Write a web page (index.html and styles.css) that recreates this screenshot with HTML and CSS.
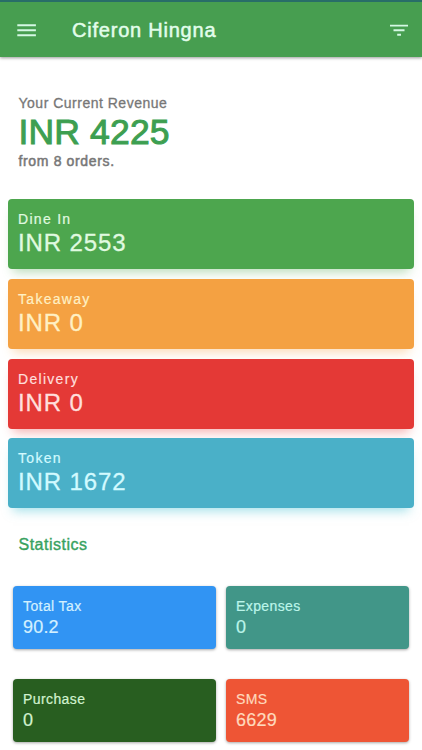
FILE: index.html
```
<!DOCTYPE html>
<html lang="en">
<head>
    <meta charset="UTF-8">
    <meta name="viewport" content="width=device-width, initial-scale=1.0">
    <title>Ciferon Hingna</title>
    <link rel="stylesheet" href="styles.css">
</head>
<body>
    <header class="header">
        <svg class="menu-icon" width="20" height="14" viewBox="0 0 20 14">
            <path d="M0.3 2.3h18.6M0.3 7.3h18.6M0.3 12.3h18.6"/>
        </svg>
        <h1 class="title">Ciferon Hingna</h1>
        <svg class="filter-icon" width="20" height="14" viewBox="0 0 20 14">
            <path d="M1 2.6h18M4.5 7.2h11M8.2 11.7h3.8"/>
        </svg>
    </header>

    <main>
        <section class="revenue">
            <p class="revenue-label">Your Current Revenue</p>
            <p class="revenue-total">INR 4225</p>
            <p class="revenue-orders">from 8 orders.</p>
        </section>

        <section class="orders">
            <div class="order-card dine-in">
                <p class="order-name">Dine In</p>
                <p class="order-amount">INR 2553</p>
            </div>
            <div class="order-card takeaway">
                <p class="order-name">Takeaway</p>
                <p class="order-amount">INR 0</p>
            </div>
            <div class="order-card delivery">
                <p class="order-name">Delivery</p>
                <p class="order-amount">INR 0</p>
            </div>
            <div class="order-card token">
                <p class="order-name">Token</p>
                <p class="order-amount">INR 1672</p>
            </div>
        </section>

        <h2 class="stats-title">Statistics</h2>
        <section class="stats">
            <div class="stat-card tax">
                <p class="stat-name">Total Tax</p>
                <p class="stat-value">90.2</p>
            </div>
            <div class="stat-card expenses">
                <p class="stat-name">Expenses</p>
                <p class="stat-value">0</p>
            </div>
            <div class="stat-card purchase">
                <p class="stat-name">Purchase</p>
                <p class="stat-value">0</p>
            </div>
            <div class="stat-card sms">
                <p class="stat-name">SMS</p>
                <p class="stat-value">6629</p>
            </div>
        </section>
    </main>
</body>
</html>
```
FILE: styles.css
```
* {
    margin: 0;
    padding: 0;
    box-sizing: border-box;
}

body {
    font-family: "Liberation Sans", Arial, sans-serif;
    background-color: #fff;
    height: 750px;
    overflow: hidden;
}

/* app bar */
.header {
    display: flex;
    align-items: center;
    height: 57px;
    padding: 0 13px 0 17px;
    border-top: 2px solid #286d68;
    background-color: #479e50;
    box-shadow: 0 1px 3px rgba(0, 0, 0, 0.4);
}

.menu-icon,
.filter-icon {
    fill: none;
    stroke: #d5f8e4;
    stroke-width: 1.9;
}

.title {
    flex: 1;
    margin-left: 35px;
    font-size: 20px;
    font-weight: normal;
    line-height: 24px;
    letter-spacing: 0.78px;
    color: #e2fdeb;
    -webkit-text-stroke: 0.5px #e2fdeb;
}

/* revenue summary */
.revenue {
    height: 142px;
    padding: 38px 18.5px 0;
    color: #777;
}

.revenue-label,
.revenue-orders {
    font-size: 14px;
    line-height: 16px;
    letter-spacing: 0.5px;
    -webkit-text-stroke: 0.3px #777;
}

.revenue-orders {
    letter-spacing: 0.65px;
    -webkit-text-stroke: 0.5px #777;
}

.revenue-total {
    font-size: 35.5px;
    line-height: 42px;
    letter-spacing: 0.15px;
    color: #3d9f51;
    -webkit-text-stroke: 1px #3d9f51;
}

/* order type cards */
.orders {
    display: flex;
    flex-direction: column;
    gap: 9.8px;
    padding: 0 8px;
}

.order-card {
    height: 70px;
    padding: 12px 10px;
    border-radius: 4px;
}

.order-name {
    font-size: 14px;
    line-height: 16px;
    letter-spacing: 1.3px;
    -webkit-text-stroke: 0.2px currentColor;
}

.order-amount {
    font-size: 24px;
    line-height: 32px;
    letter-spacing: 0.9px;
    -webkit-text-stroke: 0.3px currentColor;
}

.dine-in {
    background-color: #4da64e;
    color: #e0fae0;
    box-shadow: 0 8px 10px -5px rgba(77, 166, 78, 0.4);
}

.takeaway {
    background-color: #f4a142;
    color: #fff0c4;
    box-shadow: 0 8px 10px -5px rgba(244, 161, 66, 0.4);
}

.delivery {
    background-color: #e43936;
    color: #ffdfdc;
    box-shadow: 0 8px 10px -5px rgba(228, 57, 54, 0.4);
}

.token {
    background-color: #4ab0c8;
    color: #d2faff;
    box-shadow: 0 8px 10px -5px rgba(74, 196, 212, 0.5);
}

/* statistics */
.stats-title {
    margin: 27px 18.5px 31px;
    font-size: 16px;
    font-weight: normal;
    line-height: 20px;
    letter-spacing: 0.5px;
    color: #38a25f;
    -webkit-text-stroke: 0.4px #38a25f;
}

.stats {
    display: grid;
    grid-template-columns: 203px 183px;
    gap: 29.3px 10px;
    padding: 0 13px;
}

.stat-card {
    height: 63px;
    padding: 12px 10px;
    border-radius: 4px;
    box-shadow: 0 1px 3px rgba(0, 0, 0, 0.35);
}

.stat-name {
    font-size: 14px;
    line-height: 17px;
    letter-spacing: 0.4px;
    -webkit-text-stroke: 0.2px currentColor;
}

.stat-value {
    font-size: 18px;
    line-height: 24px;
    letter-spacing: 0.2px;
    -webkit-text-stroke: 0.2px currentColor;
}

.tax {
    background-color: #3194f3;
    color: #d3f0ff;
}

.expenses {
    background-color: #419688;
    color: #bcf5ea;
}

.purchase {
    background-color: #285e20;
    color: #d2f2cf;
}

.sms {
    background-color: #ee5535;
    color: #ffd9bd;
}
```
